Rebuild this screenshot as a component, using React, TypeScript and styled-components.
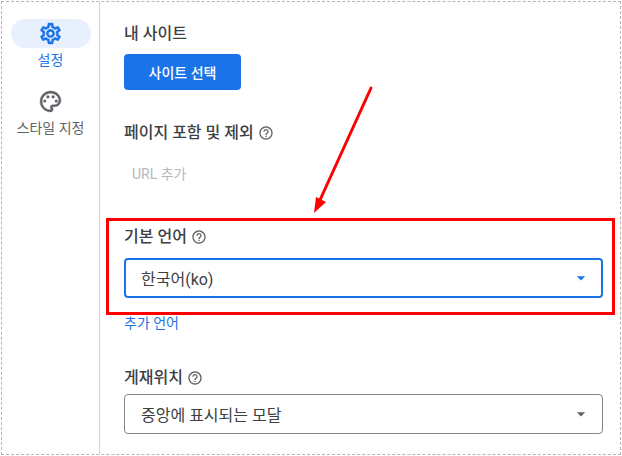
import React from 'react';
import styled, { createGlobalStyle } from 'styled-components';
import { MdOutlineSettings, MdOutlinePalette, MdHelpOutline, MdArrowDropDown } from 'react-icons/md';

const Global = createGlobalStyle`
    html, body { margin: 0; padding: 0; background: #fff; }
    body { font-family: Roboto, "Noto Sans CJK KR", sans-serif; color: #3c4043; }
`;

const Frame = styled.div`
    position: relative;
    box-sizing: border-box;
    width: 620px;
    height: 454px;
    margin: 1px 0 0 1px;
    border: 1px dashed #b5b5b5;
    display: flex;
    overflow: hidden;
`;

const Sidebar = styled.nav`
    box-sizing: border-box;
    width: 98px;
    border-right: 1px solid #d0d1d3;
    padding-top: 17px;
    display: flex;
    flex-direction: column;
    align-items: center;
    flex-shrink: 0;
`;

const NavItem = styled.div`
    display: flex;
    flex-direction: column;
    align-items: center;
    height: 51px;
    margin-bottom: 17px;
`;

const Pill = styled.div<{ $active?: boolean }>`
    width: 80px;
    height: 32px;
    border-radius: 16px;
    background: ${p => (p.$active ? '#e8f0fe' : 'transparent')};
    color: ${p => (p.$active ? '#1a73e8' : '#5f6368')};
    display: flex;
    align-items: center;
    justify-content: center;
    font-size: 25px;
    svg path:not([fill='none']) { stroke: currentColor; stroke-width: 0.4px; }
`;

const NavLabel = styled.span<{ $active?: boolean }>`
    font-size: 14px;
    line-height: 20px;
    margin-top: 2px;
    white-space: nowrap;
    color: ${p => (p.$active ? '#1a73e8' : '#5f6368')};
`;

const Content = styled.main`
    flex: 1;
    padding: 22px 17px 0 24px;
    min-width: 0;
`;

const Section = styled.section<{ $gap: number }>`
    margin-bottom: ${p => p.$gap}px;
`;

const Title = styled.div`
    display: flex;
    align-items: center;
    gap: 4px;
    font-size: 16px;
    font-weight: 500;
    line-height: 20px;
    color: #3c4043;
`;

const Help = styled(MdHelpOutline)`
    font-size: 16px;
    color: #5f6368;
`;

const PrimaryButton = styled.button`
    display: block;
    width: 117px;
    height: 36px;
    margin-top: 10px;
    border: none;
    border-radius: 4px;
    background: #1a73e8;
    color: #fff;
    font: 500 14px Roboto, "Noto Sans CJK KR", sans-serif;
`;

const Placeholder = styled.div`
    margin: 21px 0 0 8px;
    font-size: 14px;
    line-height: 20px;
    color: #b6b8bb;
`;

const Select = styled.div<{ $focused?: boolean }>`
    box-sizing: border-box;
    height: 40px;
    margin-top: ${p => (p.$focused ? 11 : 6)}px;
    padding: 0 ${p => (p.$focused ? 10 : 11)}px 0 ${p => (p.$focused ? 15 : 16)}px;
    border: ${p => (p.$focused ? '2px solid #1a73e8' : '1px solid #80868b')};
    border-radius: 4px;
    display: flex;
    align-items: center;
    justify-content: space-between;
    font-size: 16px;
    color: #3c4043;
`;

const Caret = styled(MdArrowDropDown)<{ $focused?: boolean }>`
    font-size: 20px;
    color: ${p => (p.$focused ? '#1a73e8' : '#5f6368')};
`;

const TextLink = styled.a`
    display: block;
    margin-top: 15px;
    font-size: 14px;
    line-height: 20px;
    color: #1a73e8;
`;

const Highlight = styled.div`
    position: absolute;
    left: 104px;
    top: 216px;
    box-sizing: border-box;
    width: 509px;
    height: 97px;
    border: 3px solid #fe0000;
    pointer-events: none;
`;

const Arrow = styled.svg`
    position: absolute;
    left: 300px;
    top: 75px;
    pointer-events: none;
`;

export default function App() {
    return (
        <>
            <Global />
            <Frame>
                <Sidebar>
                    <NavItem>
                        <Pill $active><MdOutlineSettings /></Pill>
                        <NavLabel $active>설정</NavLabel>
                    </NavItem>
                    <NavItem>
                        <Pill><MdOutlinePalette /></Pill>
                        <NavLabel>스타일 지정</NavLabel>
                    </NavItem>
                </Sidebar>
                <Content>
                    <Section $gap={33}>
                        <Title>내 사이트</Title>
                        <PrimaryButton>사이트 선택</PrimaryButton>
                    </Section>
                    <Section $gap={43}>
                        <Title>페이지 포함 및 제외 <Help /></Title>
                        <Placeholder>URL 추가</Placeholder>
                    </Section>
                    <Section $gap={35}>
                        <Title>기본 언어 <Help /></Title>
                        <Select $focused>
                            한국어(ko)
                            <Caret $focused />
                        </Select>
                        <TextLink>추가 언어</TextLink>
                    </Section>
                    <Section $gap={0}>
                        <Title>게재위치 <Help /></Title>
                        <Select>
                            중앙에 표시되는 모달
                            <Caret />
                        </Select>
                    </Section>
                </Content>
                <Highlight />
                <Arrow width="80" height="145" viewBox="0 0 80 145">
                    <line x1="69" y1="11" x2="18" y2="123" stroke="#fe0000" strokeWidth="3" strokeLinecap="round" />
                    <polygon points="12,136 14,120 24,125" fill="#fe0000" />
                </Arrow>
            </Frame>
        </>
    );
}
